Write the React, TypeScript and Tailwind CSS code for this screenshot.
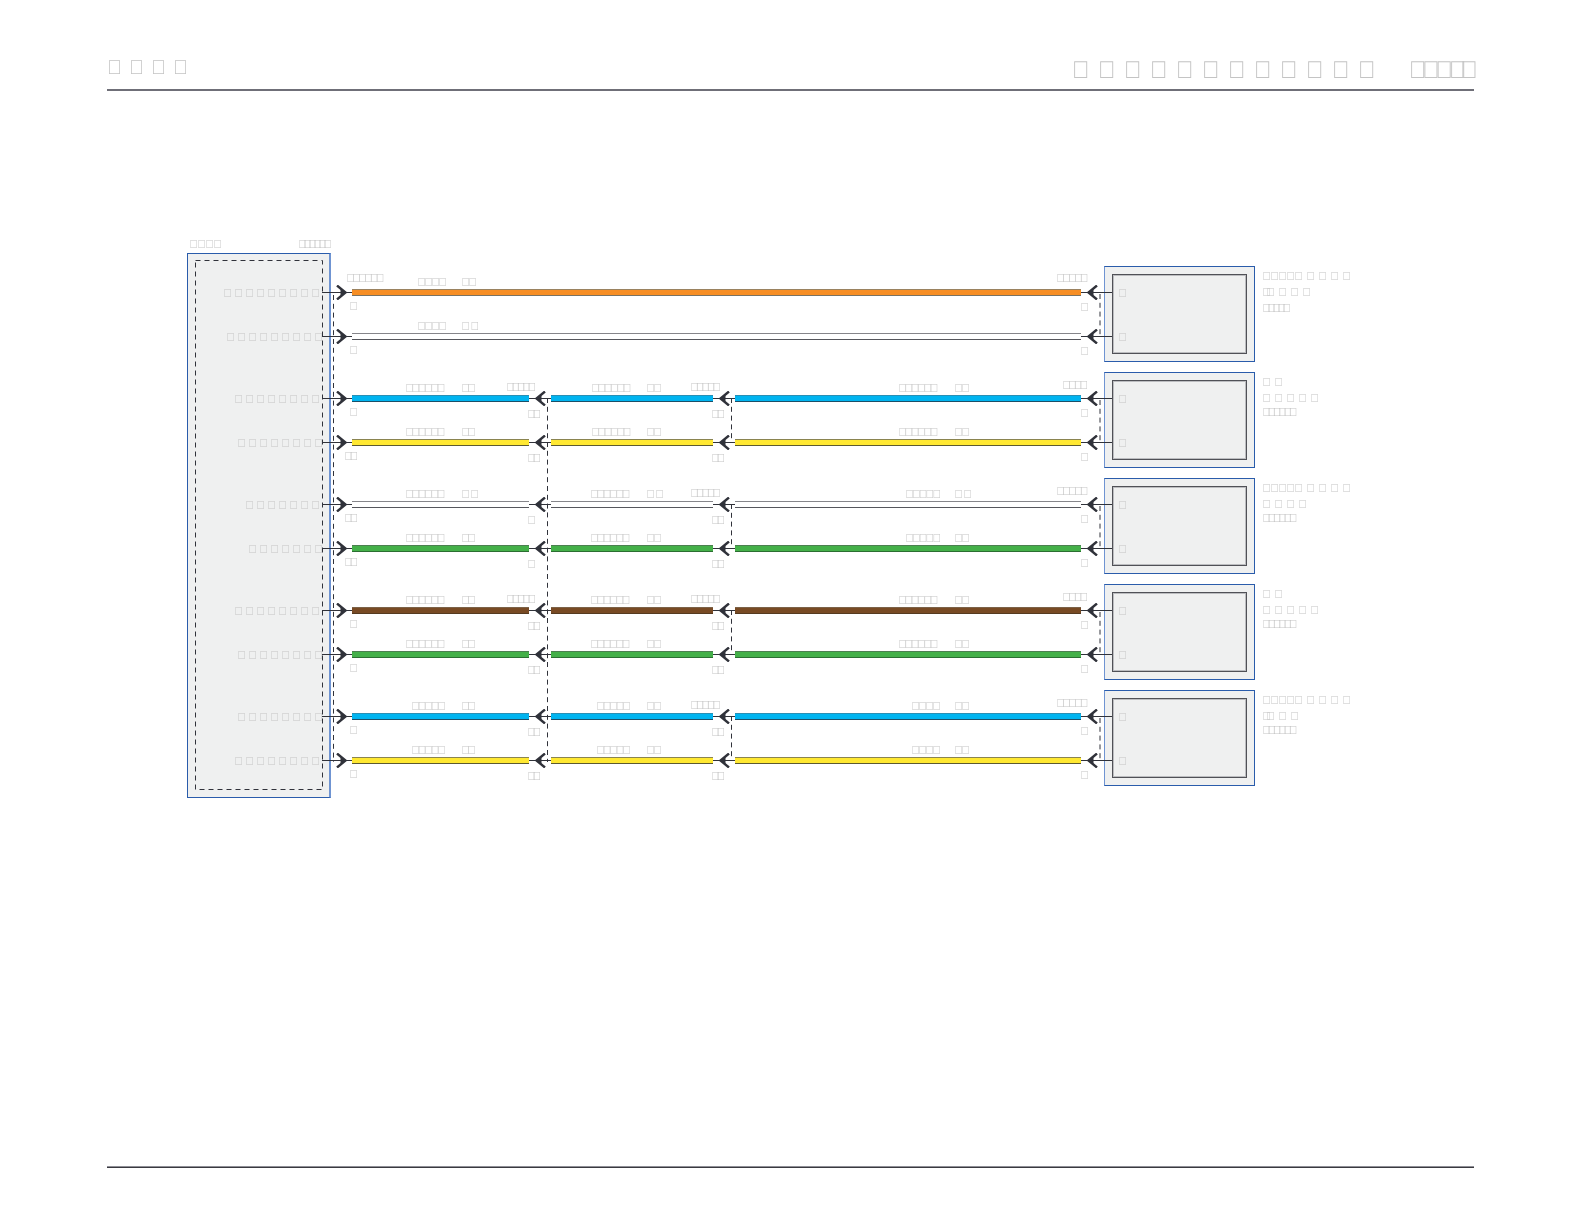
// glyphs the source PDF had no font for, they come out as the missing-glyph box
const G = "\uE000"

type Label = [number, number, number, number?]

const COLORS = {
  orange: "bg-[#f78e24] border-t-[#9a8260] border-b-[#7a7262]",
  white: "bg-white border-t-[#85858a] border-b-[#55565c]",
  blue: "bg-[#00b4f0] border-t-[#2a8fb4] border-b-[#1c4f68]",
  yellow: "bg-[#ffe832] border-t-[#8a8450] border-b-[#5c5a30]",
  green: "bg-[#44b049] border-t-[#4c7f50] border-b-[#2c6e32]",
  brown: "bg-[#784a24] border-t-[#7c6248] border-b-[#553a20]",
}
type Color = keyof typeof COLORS

const GROUPS: { wires: [Color, Color]; full?: boolean }[] = [
  { wires: ["orange", "white"], full: true },
  { wires: ["blue", "yellow"] },
  { wires: ["white", "green"] },
  { wires: ["brown", "green"] },
  { wires: ["blue", "yellow"] },
]

// x, center y, count, pitch
const SMALL: Label[] = [
  // module block
  [190, 243, 4, 8], [299, 243, 6, 5],
  [224, 292, 9, 11], [227, 336, 9, 11], [235, 398, 8, 11], [238, 442, 8, 11], [246, 504, 7, 11],
  [249, 548, 7, 11], [235, 610, 8, 11], [238, 654, 8, 11], [238, 716, 8, 11], [235, 760, 8, 11],
  // first pair
  [347, 277, 6, 5.9], [418, 281, 4, 7], [462, 281, 2, 7], [350, 305, 1],
  [1057, 277, 5, 5.9], [1081, 306, 1],
  [418, 325, 4, 7], [462, 325, 2, 9.3], [350, 349, 1], [1081, 350, 1],
  // second pair
  [406, 387, 6, 6.3], [462, 387, 2, 6], [507, 386, 5, 5.3], [350, 411, 1], [528, 413, 2, 5.3],
  [592, 387, 6, 6.3], [647, 387, 2, 7], [691, 386, 5, 5.5], [712, 413, 2, 5.3],
  [899, 387, 6, 6.3], [955, 387, 2, 7], [1063, 384, 4, 5.8], [1081, 412, 1],
  [406, 431, 6, 6.3], [462, 431, 2, 6], [345, 455, 2, 5.3], [528, 457, 2, 5.3],
  [592, 431, 6, 6.3], [647, 431, 2, 7], [712, 457, 2, 5.3],
  [899, 431, 6, 6.3], [955, 431, 2, 7], [1081, 456, 1],
  // third pair
  [406, 493, 6, 6.3], [462, 493, 2, 9], [345, 517, 2, 5.3], [528, 519, 1],
  [591, 493, 6, 6.3], [647, 493, 2, 9], [691, 492, 5, 5.5], [712, 519, 2, 5.3],
  [906, 493, 5, 6.8], [955, 493, 2, 9], [1057, 490, 5, 5.9], [1081, 518, 1],
  [406, 537, 6, 6.3], [462, 537, 2, 6], [345, 561, 2, 5.3], [528, 563, 1],
  [591, 537, 6, 6.3], [647, 537, 2, 7], [712, 563, 2, 5.3],
  [906, 537, 5, 6.8], [955, 537, 2, 7], [1081, 562, 1],
  // fourth pair
  [406, 599, 6, 6.3], [462, 599, 2, 6], [507, 598, 5, 5.3], [350, 623, 1], [528, 625, 2, 5.3],
  [591, 599, 6, 6.3], [647, 599, 2, 7], [691, 598, 5, 5.5], [712, 625, 2, 5.3],
  [899, 599, 6, 6.3], [955, 599, 2, 7], [1063, 596, 4, 5.8], [1081, 624, 1],
  [406, 643, 6, 6.3], [462, 643, 2, 6], [350, 667, 1], [528, 669, 2, 5.3],
  [591, 643, 6, 6.3], [647, 643, 2, 7], [712, 669, 2, 5.3],
  [899, 643, 6, 6.3], [955, 643, 2, 7], [1081, 668, 1],
  // fifth pair
  [412, 705, 5, 6.5], [462, 705, 2, 6], [350, 729, 1], [528, 731, 2, 5.3],
  [597, 705, 5, 6.5], [647, 705, 2, 7], [691, 704, 5, 5.5], [712, 731, 2, 5.3],
  [912, 705, 4, 7], [955, 705, 2, 7], [1057, 702, 5, 5.9], [1081, 730, 1],
  [412, 749, 5, 6.5], [462, 749, 2, 6], [350, 773, 1], [528, 775, 2, 5.3],
  [597, 749, 5, 6.5], [647, 749, 2, 7], [712, 775, 2, 5.3],
  [912, 749, 4, 7], [955, 749, 2, 7], [1081, 774, 1],
  // pins in the right hand blocks
  [1119, 292, 1], [1119, 336, 1], [1119, 398, 1], [1119, 442, 1], [1119, 504, 1],
  [1119, 548, 1], [1119, 610, 1], [1119, 654, 1], [1119, 716, 1], [1119, 760, 1],
  // names beside the blocks
  [1263, 275, 5, 8], [1307, 275, 4, 12], [1263, 291, 2, 4], [1279, 291, 3, 12], [1263, 307, 5, 5],
  [1263, 381, 2, 12], [1263, 397, 5, 12], [1263, 411, 6, 5.3],
  [1263, 487, 5, 8], [1307, 487, 4, 12], [1263, 503, 4, 12], [1263, 517, 6, 5.3],
  [1263, 593, 2, 12], [1263, 609, 5, 12], [1263, 623, 6, 5.3],
  [1263, 699, 5, 8], [1307, 699, 4, 12], [1263, 715, 2, 4], [1279, 715, 2, 12], [1263, 729, 6, 5.3],
]

function Tofu({ label }: { label: Label }) {
  const [x, y, n, pitch = 8] = label
  return (
    <span
      className="absolute -translate-y-1/2 whitespace-nowrap text-[11.5px] leading-none text-[#c6c6c6]"
      style={{ left: x - 0.8, top: y + 2, letterSpacing: pitch - 8.625 }}
    >
      {G.repeat(n)}
    </span>
  )
}

function Chevron({ side }: { side: "left" | "mid" | "right" }) {
  if (side === "left") {
    return (
      <svg className="mt-[14px] h-[15px] w-[30px] shrink-0" viewBox="0 0 30 15">
        <path d="M0 7.5H30" stroke="#30323a" />
        <path d="M15 0.5L23.5 7.5L15 14.5" fill="none" stroke="#30323a" strokeWidth="2.4" />
        <path d="M18.5 4.5L24 7.5L18.5 10.5Z" fill="#30323a" />
      </svg>
    )
  }
  return (
    <svg className={`mt-[14px] h-[15px] shrink-0 ${side === "right" ? "-mr-[8px] w-[31px]" : "w-[22px]"}`} viewBox={side === "right" ? "0 0 31 15" : "0 0 22 15"}>
      <path d={side === "right" ? "M0 7.5H31" : "M0 7.5H22"} stroke="#30323a" />
      <path d="M16 0.5L7.5 7.5L16 14.5" fill="none" stroke="#30323a" strokeWidth="2.4" />
      <path d="M12.5 4.5L7 7.5L12.5 10.5Z" fill="#30323a" />
    </svg>
  )
}

function Wire({ color, width }: { color: Color; width: string }) {
  return <div className={`mt-[18px] h-[7px] shrink-0 border-y ${width} ${COLORS[color]}`} />
}

function Row({ color, full }: { color: Color; full?: boolean }) {
  return (
    <div className="flex h-[44px]">
      <Chevron side="left" />
      {full ? (
        <Wire color={color} width="w-[729px]" />
      ) : (
        <>
          <Wire color={color} width="w-[177px]" />
          <Chevron side="mid" />
          <Wire color={color} width="w-[162px]" />
          <Chevron side="mid" />
          <Wire color={color} width="w-[346px]" />
        </>
      )}
      <Chevron side="right" />
    </div>
  )
}

function Dashes() {
  const pairs = [292, 398, 504, 610, 716]
  return (
    <svg className="absolute left-0 top-0 z-20 h-[1224px] w-[1582px]" viewBox="0 0 1582 1224" fill="none" stroke="#30323a" strokeDasharray="5 3.8">
      <rect x="195.5" y="260.5" width="127" height="529" strokeDasharray="5 4" />
      <path d="M333.5 295V762" />
      <path d="M547.5 398V762" />
      {pairs.map((y) => (
        <g key={y}>
          {y > 292 && <path d={`M731.5 ${y}V${y + 44}`} />}
          <path d={`M1100 ${y + 2}V${y + 44}`} />
        </g>
      ))}
    </svg>
  )
}

export default function App() {
  return (
    <div className="relative flex h-[1224px] w-[1582px] flex-col bg-white font-['Liberation_Sans',sans-serif]">
      <header className="ml-[107px] mr-[108px] flex h-[91px] justify-between border-b-2 border-[#6f6f78] text-[#c4c4c4]">
        <span className="mt-[55px] text-[20px] leading-[24px] tracking-[7px] will-change-transform">{G.repeat(4)}</span>
        <div className="mt-[56px] -mr-[4px] flex text-[24px] leading-[28px] will-change-transform">
          <span className="mr-[25px] tracking-[8px]">{G.repeat(12)}</span>
          <span className="tracking-[-4.7px]">{G.repeat(4)}</span>
          <span className="-ml-[2px]">{G}</span>
        </div>
      </header>

      <div className="ml-[187px] mt-[162px] flex items-start">
        <div className="h-[545px] w-[144px] shrink-0 border border-r-2 border-[#2a5cab] border-r-[#6f94d2] bg-[#eff0f0]" />
        <div className="z-10 -ml-[9px] mt-[13px] flex flex-col gap-[10px]">
          {GROUPS.map((group, i) => (
            <div key={i} className="flex h-[96px] items-start">
              <div className="w-[782px] shrink-0 pt-[5px]">
                <Row color={group.wires[0]} full={group.full} />
                <Row color={group.wires[1]} full={group.full} />
              </div>
              <div className="-z-10 h-[96px] w-[151px] shrink-0 border border-[#2a5cab] border-l-[#6f94d2] bg-[#eff0f0] p-[7px]">
                <div className="h-[80px] w-[135px] border border-[#505157]">
                  <div className="h-full border border-[#bcbdc0]" />
                </div>
              </div>
            </div>
          ))}
        </div>
      </div>

      <footer className="ml-[107px] mr-[108px] mb-[56px] mt-auto h-[2px] border-y border-t-[#8f8f96] border-b-[#3a3a40]" />

      <Dashes />
      <div className="absolute inset-0 z-20 will-change-transform">
        {SMALL.map((label, i) => (
          <Tofu key={i} label={label} />
        ))}
      </div>
    </div>
  )
}
